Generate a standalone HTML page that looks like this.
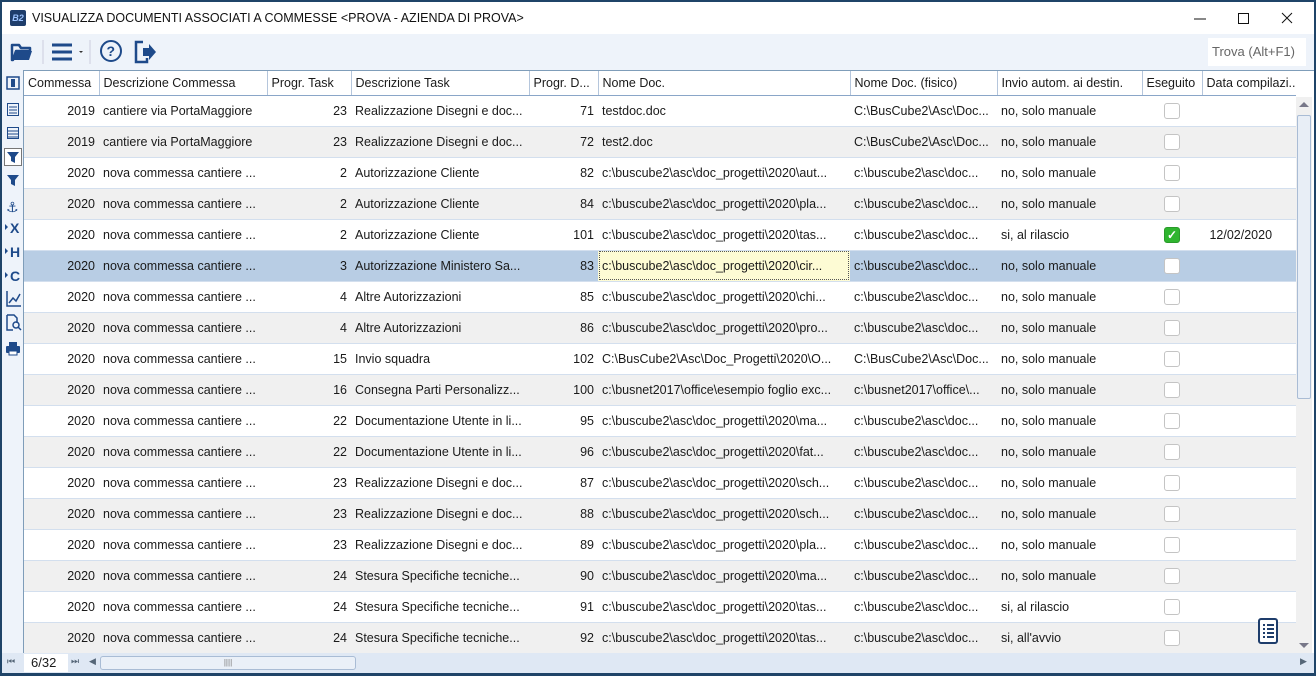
<!DOCTYPE html>
<html><head><meta charset="utf-8"><style>
*{box-sizing:border-box;margin:0;padding:0}
body{width:1316px;height:676px;overflow:hidden;background:#1f4468;font-family:"Liberation Sans",sans-serif;font-size:12.5px;color:#1a1a1a;position:relative}
#win{position:absolute;left:2px;top:2px;width:1312px;height:671px;background:#fff}
#title{position:absolute;left:0;top:0;width:1312px;height:32px;background:#fff}
#title .logo{position:absolute;left:8px;top:8px;width:16px;height:16px;background:#1e3d6b;border-radius:2px;color:#9cc3ff;font-size:9px;font-style:italic;font-weight:bold;text-align:center;line-height:16px}
#title .t{position:absolute;left:30px;top:9px;font-size:12.5px;color:#111}
#tb{position:absolute;left:0;top:32px;width:1312px;height:36px;background:#eef3fa}
#trova{position:absolute;left:1206px;top:4px;width:98px;height:28px;background:#fff;color:#666;font-size:13px;line-height:28px;padding-left:4px}
#side{position:absolute;left:0;top:68px;width:22px;height:583px;background:#eef3fa;border-right:1px solid #7f9db9}
#grid{position:absolute;left:22px;top:68px;width:1272px;height:583px;overflow:hidden;border-top:1px solid #7f9db9}
table{border-collapse:collapse;table-layout:fixed;width:1286px}
td,th{height:31px;white-space:nowrap;overflow:hidden;padding:0 4px;font-weight:normal;border-bottom:1px solid #d3dfee}
th{height:24px;text-align:left;border-right:1px solid #b5c6dc;border-bottom:1px solid #8aa6c8;background:#fff}
tr:nth-child(odd) td{background:#f0f0f0}
tr.sel td{background:#b8cde4}
td.r{text-align:right}
td.c{text-align:center}
td.y{background:#fdfbd4!important;outline:1px dotted #555;outline-offset:-2px}
.cb{display:inline-block;width:16px;height:16px;border:1px solid #c4c4c4;border-radius:3px;background:#fff;vertical-align:middle}
.cb.on{background:#2fb52f;border-color:#2a9a2a;color:#fff;font-size:12px;line-height:14px;font-weight:bold}
#vs{position:absolute;left:1294px;top:95px;width:16px;height:556px;background:#f0f0f0}
#vs .th{position:absolute;left:1px;top:18px;width:14px;height:284px;background:#e8eef6;border:1px solid #a9bcd5;border-radius:2px}
#bot{position:absolute;left:0;top:651px;width:1312px;height:20px;background:#dfe8f4}
#pg{position:absolute;left:22px;top:1px;width:44px;height:18px;background:#fff;font-size:13px;line-height:18px;padding-left:7px}
#hs{position:absolute;left:98px;top:3px;width:256px;height:14px;background:#eaf0f8;border:1px solid #a9bcd5;border-radius:3px;text-align:center;font-size:8px;color:#777;line-height:12px}
</style></head><body><div id="win">
<div id="title"><div class="logo">B2</div><div class="t">VISUALIZZA DOCUMENTI ASSOCIATI A COMMESSE &lt;PROVA - AZIENDA DI PROVA&gt;</div>
<svg style="position:absolute;left:1180px;top:8px" width="120" height="18"><line x1="12" y1="9" x2="24" y2="9" stroke="#111"/><rect x="56.5" y="3.5" width="10" height="10" fill="none" stroke="#111"/><path d="M100 3l10 10M110 3l-10 10" stroke="#111"/></svg></div>
<div id="tb">
<svg width="170" height="36" style="position:absolute;left:0;top:0"><path d="M10 11h7l2 3h9v3H14l-3 9h-1z" fill="none" stroke="#1e4a8a" stroke-width="2.5" stroke-linejoin="round"/><path d="M13 17h17l-3 9H10z" fill="#1e4a8a"/><line x1="41" y1="6" x2="41" y2="30" stroke="#ccd"/><path d="M50 11h20M50 18h20M50 25h20" stroke="#1e4a8a" stroke-width="3"/><path d="M77 17l4 0-2 2z" fill="#333"/><line x1="88" y1="6" x2="88" y2="30" stroke="#ccd"/><circle cx="109" cy="17" r="10" fill="none" stroke="#1e4a8a" stroke-width="2"/><text x="104.5" y="22" font-size="14" font-weight="bold" fill="#1e4a8a" font-family="Liberation Sans">?</text><path d="M141 8h-7v20h11v-4" fill="none" stroke="#1e4a8a" stroke-width="2.5"/><path d="M141 14h6v-4l7 8-7 8v-4h-6z" fill="#1e4a8a"/></svg>
<div id="trova">Trova (Alt+F1)</div></div>
<div id="side">
<svg width="22" height="300" style="position:absolute;left:0;top:0">
<rect x="5" y="7" width="12" height="12" fill="none" stroke="#1e4a8a" stroke-width="1.5"/><rect x="9" y="9" width="4" height="8" fill="#1e4a8a"/>
<rect x="5.5" y="33.5" width="11" height="12" fill="none" stroke="#1e4a8a"/><path d="M7 37h8M7 40h8M7 43h8" stroke="#1e4a8a"/>
<rect x="5.5" y="57.5" width="11" height="11" fill="none" stroke="#1e4a8a"/><path d="M6 61h10M6 64h10M6 67h10" stroke="#1e4a8a"/>
<rect x="2.5" y="78.5" width="17" height="17" fill="#fff" stroke="#777"/><path d="M5 82h12l-4 5v6l-4-2v-4z" fill="#1e4a8a"/>
<path d="M5 105h12l-4 5v6l-4-2v-4z" fill="#1e4a8a"/>
<text x="4" y="142" font-size="14" fill="#1e4a8a" font-family="DejaVu Sans">⚓</text>
<path d="M3 154l3 3-3 3z M3 178l3 3-3 3z M3 202l3 3-3 3z" fill="#1e4a8a"/>
<text x="8" y="163" font-size="14" font-weight="bold" fill="#1e4a8a" font-family="Liberation Sans">X</text>
<text x="8" y="187" font-size="14" font-weight="bold" fill="#1e4a8a" font-family="Liberation Sans">H</text>
<text x="8" y="211" font-size="14" font-weight="bold" fill="#1e4a8a" font-family="Liberation Sans">C</text>
<path d="M5 221v15h14M7 233l4-5 3 3 4-7" fill="none" stroke="#1e4a8a" stroke-width="1.5"/>
<path d="M5 245h7l3 3v5M5 245v15h6" fill="none" stroke="#1e4a8a" stroke-width="1.5"/><circle cx="14" cy="255" r="3" fill="none" stroke="#1e4a8a" stroke-width="1.5"/><path d="M16 257l3 3" stroke="#1e4a8a" stroke-width="1.5"/>
<rect x="7" y="272" width="8" height="4" fill="#1e4a8a"/><rect x="4" y="276" width="14" height="7" rx="1" fill="#1e4a8a"/><rect x="7" y="281" width="8" height="4" fill="#fff" stroke="#1e4a8a"/>
</svg>
</div>
<div id="grid"><table>
<colgroup><col style="width:75px"><col style="width:168px"><col style="width:84px"><col style="width:178px"><col style="width:69px"><col style="width:252px"><col style="width:147px"><col style="width:145px"><col style="width:60px"><col style="width:108px"></colgroup>
<tr><th>Commessa</th><th>Descrizione Commessa</th><th>Progr. Task</th><th>Descrizione Task</th><th>Progr. D...</th><th>Nome Doc.</th><th>Nome Doc. (fisico)</th><th>Invio autom. ai destin.</th><th>Eseguito</th><th>Data compilazi...</th></tr>
<tr><td class="r">2019</td><td>cantiere via PortaMaggiore</td><td class="r">23</td><td>Realizzazione Disegni e doc...</td><td class="r">71</td><td>testdoc.doc</td><td>C:\BusCube2\Asc\Doc...</td><td>no, solo manuale</td><td class="c"><span class="cb"></span></td><td></td></tr>
<tr><td class="r">2019</td><td>cantiere via PortaMaggiore</td><td class="r">23</td><td>Realizzazione Disegni e doc...</td><td class="r">72</td><td>test2.doc</td><td>C:\BusCube2\Asc\Doc...</td><td>no, solo manuale</td><td class="c"><span class="cb"></span></td><td></td></tr>
<tr><td class="r">2020</td><td>nova commessa cantiere ...</td><td class="r">2</td><td>Autorizzazione Cliente</td><td class="r">82</td><td>c:\buscube2\asc\doc_progetti\2020\aut...</td><td>c:\buscube2\asc\doc...</td><td>no, solo manuale</td><td class="c"><span class="cb"></span></td><td></td></tr>
<tr><td class="r">2020</td><td>nova commessa cantiere ...</td><td class="r">2</td><td>Autorizzazione Cliente</td><td class="r">84</td><td>c:\buscube2\asc\doc_progetti\2020\pla...</td><td>c:\buscube2\asc\doc...</td><td>no, solo manuale</td><td class="c"><span class="cb"></span></td><td></td></tr>
<tr><td class="r">2020</td><td>nova commessa cantiere ...</td><td class="r">2</td><td>Autorizzazione Cliente</td><td class="r">101</td><td>c:\buscube2\asc\doc_progetti\2020\tas...</td><td>c:\buscube2\asc\doc...</td><td>si, al rilascio</td><td class="c"><span class="cb on">✓</span></td><td>&nbsp;12/02/2020</td></tr>
<tr class="sel"><td class="r">2020</td><td>nova commessa cantiere ...</td><td class="r">3</td><td>Autorizzazione Ministero Sa...</td><td class="r">83</td><td class="y">c:\buscube2\asc\doc_progetti\2020\cir...</td><td>c:\buscube2\asc\doc...</td><td>no, solo manuale</td><td class="c"><span class="cb"></span></td><td></td></tr>
<tr><td class="r">2020</td><td>nova commessa cantiere ...</td><td class="r">4</td><td>Altre Autorizzazioni</td><td class="r">85</td><td>c:\buscube2\asc\doc_progetti\2020\chi...</td><td>c:\buscube2\asc\doc...</td><td>no, solo manuale</td><td class="c"><span class="cb"></span></td><td></td></tr>
<tr><td class="r">2020</td><td>nova commessa cantiere ...</td><td class="r">4</td><td>Altre Autorizzazioni</td><td class="r">86</td><td>c:\buscube2\asc\doc_progetti\2020\pro...</td><td>c:\buscube2\asc\doc...</td><td>no, solo manuale</td><td class="c"><span class="cb"></span></td><td></td></tr>
<tr><td class="r">2020</td><td>nova commessa cantiere ...</td><td class="r">15</td><td>Invio squadra</td><td class="r">102</td><td>C:\BusCube2\Asc\Doc_Progetti\2020\O...</td><td>C:\BusCube2\Asc\Doc...</td><td>no, solo manuale</td><td class="c"><span class="cb"></span></td><td></td></tr>
<tr><td class="r">2020</td><td>nova commessa cantiere ...</td><td class="r">16</td><td>Consegna Parti Personalizz...</td><td class="r">100</td><td>c:\busnet2017\office\esempio foglio exc...</td><td>c:\busnet2017\office\...</td><td>no, solo manuale</td><td class="c"><span class="cb"></span></td><td></td></tr>
<tr><td class="r">2020</td><td>nova commessa cantiere ...</td><td class="r">22</td><td>Documentazione Utente in li...</td><td class="r">95</td><td>c:\buscube2\asc\doc_progetti\2020\ma...</td><td>c:\buscube2\asc\doc...</td><td>no, solo manuale</td><td class="c"><span class="cb"></span></td><td></td></tr>
<tr><td class="r">2020</td><td>nova commessa cantiere ...</td><td class="r">22</td><td>Documentazione Utente in li...</td><td class="r">96</td><td>c:\buscube2\asc\doc_progetti\2020\fat...</td><td>c:\buscube2\asc\doc...</td><td>no, solo manuale</td><td class="c"><span class="cb"></span></td><td></td></tr>
<tr><td class="r">2020</td><td>nova commessa cantiere ...</td><td class="r">23</td><td>Realizzazione Disegni e doc...</td><td class="r">87</td><td>c:\buscube2\asc\doc_progetti\2020\sch...</td><td>c:\buscube2\asc\doc...</td><td>no, solo manuale</td><td class="c"><span class="cb"></span></td><td></td></tr>
<tr><td class="r">2020</td><td>nova commessa cantiere ...</td><td class="r">23</td><td>Realizzazione Disegni e doc...</td><td class="r">88</td><td>c:\buscube2\asc\doc_progetti\2020\sch...</td><td>c:\buscube2\asc\doc...</td><td>no, solo manuale</td><td class="c"><span class="cb"></span></td><td></td></tr>
<tr><td class="r">2020</td><td>nova commessa cantiere ...</td><td class="r">23</td><td>Realizzazione Disegni e doc...</td><td class="r">89</td><td>c:\buscube2\asc\doc_progetti\2020\pla...</td><td>c:\buscube2\asc\doc...</td><td>no, solo manuale</td><td class="c"><span class="cb"></span></td><td></td></tr>
<tr><td class="r">2020</td><td>nova commessa cantiere ...</td><td class="r">24</td><td>Stesura Specifiche tecniche...</td><td class="r">90</td><td>c:\buscube2\asc\doc_progetti\2020\ma...</td><td>c:\buscube2\asc\doc...</td><td>no, solo manuale</td><td class="c"><span class="cb"></span></td><td></td></tr>
<tr><td class="r">2020</td><td>nova commessa cantiere ...</td><td class="r">24</td><td>Stesura Specifiche tecniche...</td><td class="r">91</td><td>c:\buscube2\asc\doc_progetti\2020\tas...</td><td>c:\buscube2\asc\doc...</td><td>si, al rilascio</td><td class="c"><span class="cb"></span></td><td></td></tr>
<tr><td class="r">2020</td><td>nova commessa cantiere ...</td><td class="r">24</td><td>Stesura Specifiche tecniche...</td><td class="r">92</td><td>c:\buscube2\asc\doc_progetti\2020\tas...</td><td>c:\buscube2\asc\doc...</td><td>si, all'avvio</td><td class="c"><span class="cb"></span></td><td></td></tr>
</table></div>
<div style="position:absolute;left:1294px;top:68px;width:18px;height:27px;background:#fff;border-top:1px solid #7f9db9"></div>
<div id="vs"><div style="position:absolute;left:3px;top:5px;border:5px solid transparent;border-bottom-color:#778;border-top:0"></div><div class="th"></div><div style="position:absolute;left:3px;bottom:5px;border:5px solid transparent;border-top-color:#778;border-bottom:0"></div></div>
<svg style="position:absolute;left:1255px;top:616px" width="22" height="26"><rect x="2" y="1" width="18" height="24" rx="2" fill="#fff" stroke="#1e3d6b" stroke-width="2"/><path d="M6 7h2M10 7h7M6 11h2M10 11h7M6 15h2M10 15h7M6 19h2M10 19h7" stroke="#1e3d6b" stroke-width="2"/></svg>
<div id="bot"><span style="position:absolute;left:5px;top:3px;font-size:9px;color:#567">⏮</span><div id="pg">6/32</div><span style="position:absolute;left:69px;top:3px;font-size:9px;color:#567">⏭</span><span style="position:absolute;left:87px;top:3px;font-size:9px;color:#567">◀</span><div id="hs">||||</div><span style="position:absolute;left:1298px;top:3px;font-size:9px;color:#567">▶</span></div>
</div></body></html>
